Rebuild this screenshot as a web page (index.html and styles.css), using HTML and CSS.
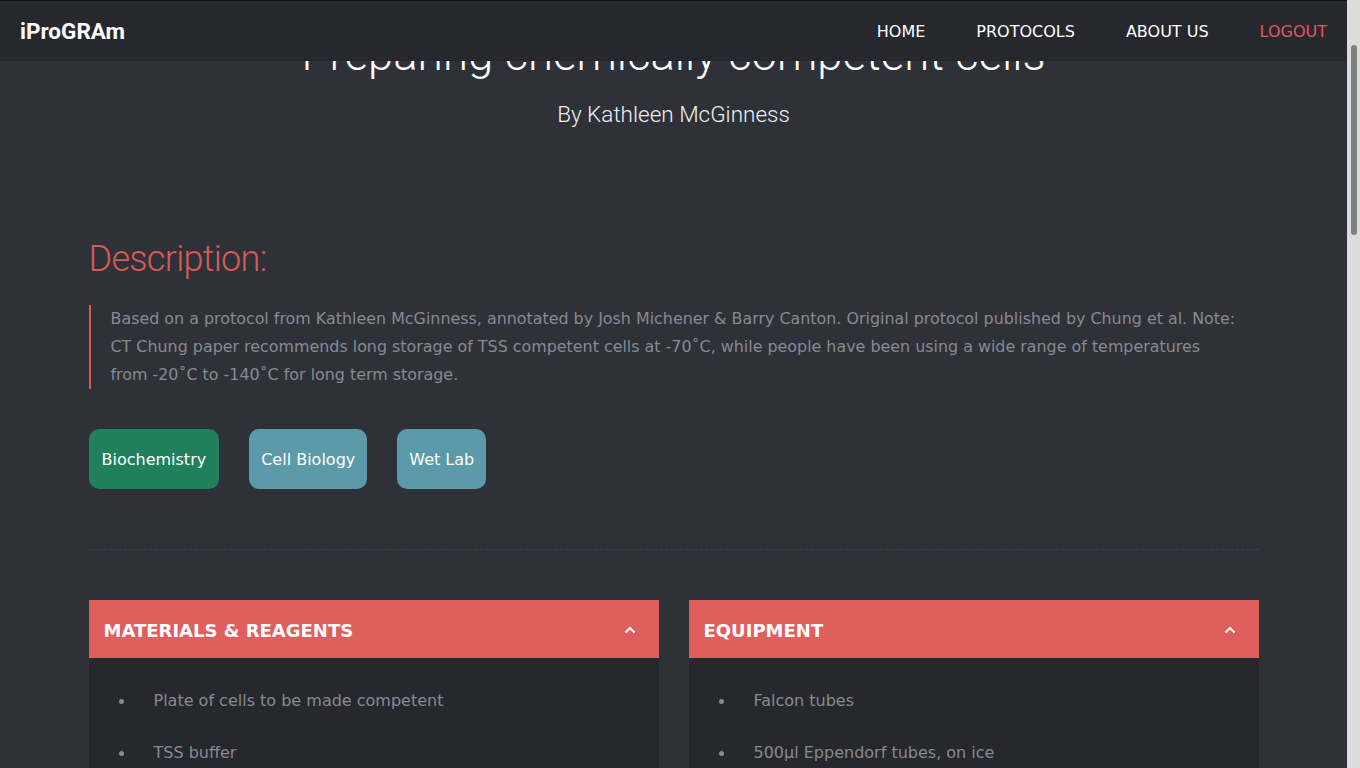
FILE: index.html
```html
<!DOCTYPE html>
<html lang="en">
<head>
<meta charset="utf-8">
<title>iProGRAm - Preparing chemically competent cells</title>
<link rel="stylesheet" href="styles.css">
</head>
<body>
<div class="page">
  <nav class="navbar">
    <a class="brand" href="#">iProGRAm</a>
    <ul class="nav-links">
      <li><a href="#">HOME</a></li>
      <li><a href="#">PROTOCOLS</a></li>
      <li><a href="#">ABOUT US</a></li>
      <li><a class="logout" href="#">LOGOUT</a></li>
    </ul>
  </nav>

  <header class="hero">
    <h1 class="title">Preparing chemically competent cells</h1>
    <p class="author">By Kathleen McGinness</p>
  </header>

  <main class="container">
    <h2 class="section-title">Description:</h2>
    <blockquote class="description">Based on a protocol from Kathleen McGinness, annotated by Josh Michener &amp; Barry Canton. Original protocol published by Chung et al. Note: CT Chung paper recommends long storage of TSS competent cells at -70˚C, while people have been using a wide range of temperatures from -20˚C to -140˚C for long term storage.</blockquote>

    <div class="tags">
      <span class="tag tag-green">Biochemistry</span>
      <span class="tag tag-blue">Cell Biology</span>
      <span class="tag tag-blue">Wet Lab</span>
    </div>

    <hr class="divider">

    <div class="panels">
      <section class="panel">
        <div class="panel-head">
          <span>MATERIALS &amp; REAGENTS</span>
          <svg class="chev" width="12" height="8" viewBox="0 0 12 8"><polyline points="1.5,6.5 6,2 10.5,6.5" fill="none" stroke="#fff" stroke-width="2"/></svg>
        </div>
        <ul class="panel-list">
          <li>Plate of cells to be made competent</li>
          <li>TSS buffer</li>
        </ul>
      </section>
      <section class="panel">
        <div class="panel-head">
          <span>EQUIPMENT</span>
          <svg class="chev" width="12" height="8" viewBox="0 0 12 8"><polyline points="1.5,6.5 6,2 10.5,6.5" fill="none" stroke="#fff" stroke-width="2"/></svg>
        </div>
        <ul class="panel-list">
          <li>Falcon tubes</li>
          <li>500µl Eppendorf tubes, on ice</li>
        </ul>
      </section>
    </div>
  </main>
</div>
<div class="scrollbar"><div class="thumb"></div></div>
</body>
</html>
```

FILE: styles.css
```css
html {
  overflow: hidden;
}
body {
  margin: 0;
  background: #2f3139;
  font-family: "DejaVu Sans", sans-serif;
  color: #fff;
}
.page {
  width: 1347px;
}
.navbar {
  position: fixed;
  top: 0;
  left: 0;
  width: 1347px;
  height: 61px;
  border-top: 1px solid #111214;
  box-sizing: border-box;
  background: #26282d;
  display: flex;
  align-items: center;
  justify-content: space-between;
  padding: 0 20px;
  z-index: 10;
}
.brand {
  font-family: Roboto, sans-serif;
  font-weight: 700;
  font-size: 22.5px;
  color: #fff;
  text-decoration: none;
}
.nav-links {
  list-style: none;
  margin: 0;
  padding: 0;
  display: flex;
  gap: 51px;
}
.nav-links a {
  font-size: 16px;
  color: #fff;
  text-decoration: none;
}
.nav-links a.logout {
  color: #e05a5a;
}
.hero {
  text-align: center;
  padding-top: 25px;
}
.title {
  margin: 0;
  font-family: Roboto, sans-serif;
  font-weight: 300;
  font-size: 45.5px;
  line-height: 60px;
  color: #fff;
}
.author {
  margin: 14px 0 0;
  font-family: Roboto, sans-serif;
  font-weight: 300;
  font-size: 22.5px;
  line-height: 30px;
  color: #eef0f4;
}
.container {
  width: 1170px;
  margin: 0 auto;
}
.section-title {
  margin: 108px 0 0;
  font-family: Roboto, sans-serif;
  font-weight: 300;
  font-size: 36px;
  line-height: 44px;
  letter-spacing: -0.7px;
  color: #d85a56;
}
.description {
  margin: 24px 0 0;
  padding: 0 20px 0 20px;
  border-left: 2px solid #d85a56;
  font-size: 15.9px;
  line-height: 28px;
  color: #858a93;
}
.tags {
  display: flex;
  gap: 30px;
  margin-top: 40px;
}
.tag {
  height: 60px;
  display: flex;
  align-items: center;
  padding: 0 13px;
  border-radius: 10px;
  font-size: 16px;
  color: #fff;
}
.tag-green {
  background: #20805c;
}
.tag-blue {
  background: #5b9aa8;
  padding: 0 12px;
}
.divider {
  margin: 60px 0 0;
  border: 0;
  border-top: 1px dashed #3c3f47;
  height: 0;
}
.panels {
  margin-top: 50px;
  display: grid;
  grid-template-columns: 1fr 1fr;
  gap: 30px;
}
.panel {
  background: #26282d;
}
.panel-head {
  height: 58px;
  background: #df5e5e;
  display: flex;
  align-items: center;
  justify-content: space-between;
  padding: 2px 23px 0 15px;
  box-sizing: border-box;
  font-size: 18px;
  font-weight: 700;
  color: #fff;
}
.chev {
  display: block;
}
.panel-list {
  list-style: none;
  margin: 0;
  padding: 31px 0 0 30px;
}
.panel-list li {
  display: flex;
  align-items: center;
  font-size: 16px;
  line-height: 24px;
  color: #858a93;
  margin-bottom: 28px;
}
.panel-list li::before {
  content: "";
  width: 5px;
  height: 5px;
  border-radius: 50%;
  background: #858a93;
  margin-right: 30px;
  flex: none;
}
.scrollbar {
  position: fixed;
  top: 0;
  right: 0;
  width: 13px;
  height: 100%;
  background: #dcdcdc;
}
.thumb {
  position: absolute;
  top: 45px;
  left: 4px;
  width: 6px;
  height: 190px;
  border-radius: 3px;
  background: #7e807f;
}
```
